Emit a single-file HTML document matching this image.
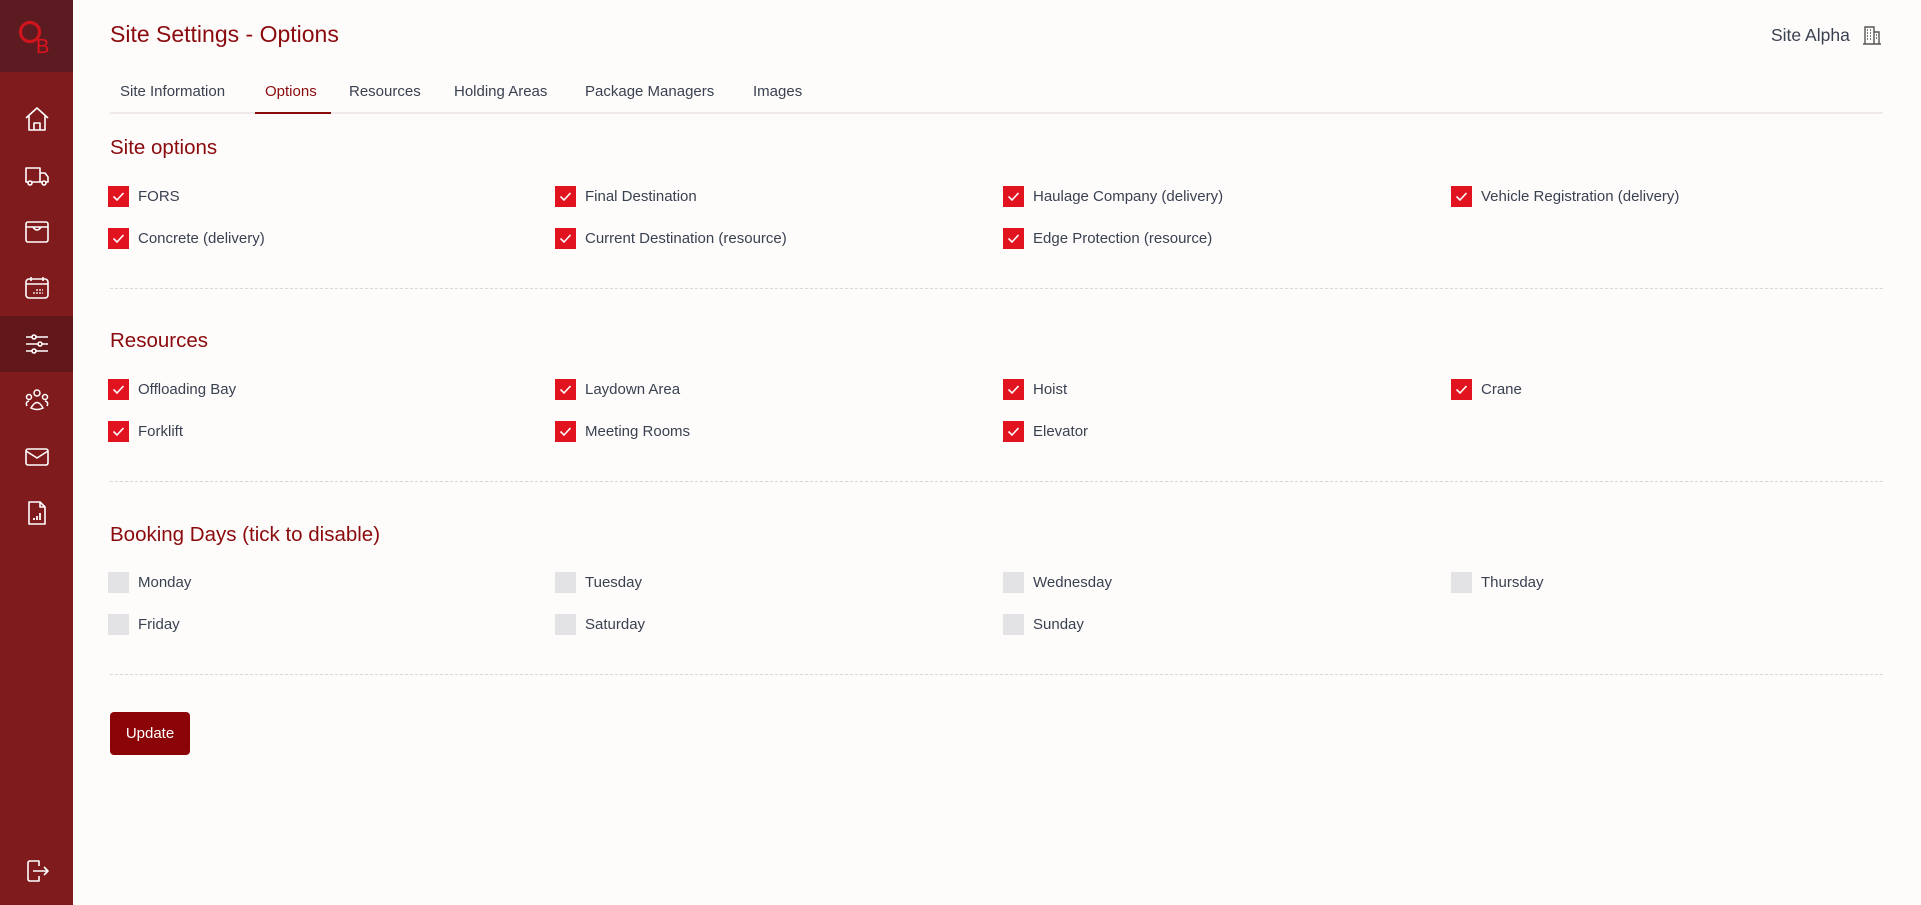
<!DOCTYPE html>
<html><head><meta charset="utf-8"><style>
*{margin:0;padding:0;box-sizing:border-box}
body{width:1921px;height:905px;background:#fdfcfb;font-family:"Liberation Sans",sans-serif;position:relative;overflow:hidden;color:#3a4150}
.sb{position:absolute;left:0;top:0;width:73px;height:905px;background:#7f1b1d}
.logo{position:absolute;left:0;top:0;width:73px;height:72px;background:#5c1b20}
.act{position:absolute;left:0;top:316px;width:73px;height:56px;background:#62171a}
.ic{position:absolute;left:24px;width:26px;height:26px}
.t{position:absolute;white-space:nowrap}
.h1{left:110px;top:21px;font-size:23px;color:#8b0a0d}
.tab{top:83px;font-size:15px;color:#3a4150}
.h2{left:110px;font-size:20.5px;color:#8b0a0d}
.cb{position:absolute;width:21px;height:21px;background:#e0131f}
.cb.off{background:#e3e3e6}
.cb svg{position:absolute;left:4px;top:5px}
.lb{position:absolute;font-size:15px;color:#3a4150;white-space:nowrap}
.dash{position:absolute;left:110px;width:1773px;border-top:1px dashed #d8d8d8}
</style></head><body>
<div class="sb"></div>
<div class="logo">
<svg width="73" height="72" viewBox="0 0 73 72"><circle cx="30" cy="32" r="9.5" fill="none" stroke="#d0141c" stroke-width="3.2"/><text x="36" y="53" font-family="Liberation Sans" font-size="20" fill="#e0131f">B</text></svg>
</div>
<div class="act"></div>
<svg class="ic" style="top:106px" viewBox="0 0 26 26" fill="none" stroke="#fff" stroke-width="1.6" stroke-linejoin="round"><path d="M2 12 L13 2 L24 12 M5 10 V24 H21 V10 M10 24 V17 H16 V24"/></svg>
<svg class="ic" style="top:163px" viewBox="0 0 26 26" fill="none" stroke="#fff" stroke-width="1.6" stroke-linejoin="round"><path d="M2 5 H16 V19 H2 Z M16 10 H21 L24 14 V19 H16"/><circle cx="6" cy="20" r="2" fill="#7f1b1d"/><circle cx="20" cy="20" r="2" fill="#7f1b1d"/></svg>
<svg class="ic" style="top:219px" viewBox="0 0 26 26" fill="none" stroke="#fff" stroke-width="1.6" stroke-linejoin="round"><rect x="2" y="3" width="22" height="20" rx="2"/><path d="M2 8 H24 M2 8 L9 8 Q13 14 17 8"/></svg>
<svg class="ic" style="top:275px" viewBox="0 0 26 26" fill="none" stroke="#fff" stroke-width="1.6"><rect x="2" y="4" width="22" height="19" rx="3"/><path d="M2 9 H24 M7 2 V6 M19 2 V6"/><path d="M9 18h2M12 18h2M15 18h2M12 15h2M15 15h2M18 15h1M18 18h1" stroke-width="1.3"/></svg>
<svg class="ic" style="top:331px" viewBox="0 0 26 26" fill="none" stroke="#fff" stroke-width="1.6"><path d="M2 6H24M2 13H24M2 20H24"/><circle cx="10" cy="6" r="2" fill="#62171a"/><circle cx="16" cy="13" r="2" fill="#62171a"/><circle cx="10" cy="20" r="2" fill="#62171a"/></svg>
<svg class="ic" style="top:387px" viewBox="0 0 26 26" fill="none" stroke="#fff" stroke-width="1.5"><circle cx="13" cy="6" r="3"/><circle cx="5" cy="10" r="2.5"/><circle cx="21" cy="10" r="2.5"/><path d="M7 21 Q13 10 19 21 Q13 24 7 21Z M3 19 Q1 15 5 14 M23 19 Q25 15 21 14"/></svg>
<svg class="ic" style="top:444px" viewBox="0 0 26 26" fill="none" stroke="#fff" stroke-width="1.6" stroke-linejoin="round"><rect x="2" y="5" width="22" height="16" rx="2"/><path d="M2 7 L13 14 L24 7"/></svg>
<svg class="ic" style="top:500px" viewBox="0 0 26 26" fill="none" stroke="#fff" stroke-width="1.6" stroke-linejoin="round"><path d="M5 2 H16 L21 7 V24 H5 Z M16 2 V7 H21"/><path d="M10 20V18M13 20V16M16 20V13" stroke-width="1.8"/></svg>
<svg class="ic" style="top:858px" viewBox="0 0 26 26" fill="none" stroke="#fff" stroke-width="1.6" stroke-linejoin="round"><path d="M15 8 V3 H6 Q4 3 4 5 V21 Q4 23 6 23 H15 V18 M9 13 H24 M20 9 L24 13 L20 17"/></svg>

<div class="t h1">Site Settings - Options</div>
<div class="t" style="left:1771px;top:25px;font-size:17.5px;color:#3a4150">Site Alpha</div>
<svg style="position:absolute;left:1862px;top:25px" width="20" height="20" viewBox="0 0 20 20" fill="none" stroke="#555" stroke-width="1.4"><path d="M1 19H19M3 19V2H12V19M12 7H17V19"/><path d="M5 5h1M8 5h1M5 8h1M8 8h1M5 11h1M8 11h1M5 14h1M8 14h1M14 10h1M14 13h1" stroke-width="1.5"/></svg>

<div style="position:absolute;left:110px;top:112px;width:1773px;height:2px;background:#efe9e9"></div>
<div style="position:absolute;left:255px;top:112px;width:76px;height:2px;background:#8b0a0d"></div>
<div class="t tab" style="left:120px">Site Information</div>
<div class="t tab" style="left:265px;color:#8b0a0d">Options</div>
<div class="t tab" style="left:349px">Resources</div>
<div class="t tab" style="left:454px">Holding Areas</div>
<div class="t tab" style="left:585px">Package Managers</div>
<div class="t tab" style="left:753px">Images</div>

<div class="t h2" style="top:136px">Site options</div>
<div class="dash" style="top:288px"></div>
<div class="t h2" style="top:329px">Resources</div>
<div class="dash" style="top:481px"></div>
<div class="t h2" style="top:523px">Booking Days (tick to disable)</div>
<div class="dash" style="top:674px"></div>

<div id="boxes"></div>
<div style="position:absolute;left:110px;top:712px;width:80px;height:43px;background:#8b0508;border-radius:4px;color:#fff;font-size:15px;text-align:center;line-height:43px">Update</div>

<script>
var cols=[108,555,1003,1451];
var rows=[
[186,["FORS","Final Destination","Haulage Company (delivery)","Vehicle Registration (delivery)"],1],
[228,["Concrete (delivery)","Current Destination (resource)","Edge Protection (resource)"],1],
[379,["Offloading Bay","Laydown Area","Hoist","Crane"],1],
[421,["Forklift","Meeting Rooms","Elevator"],1],
[572,["Monday","Tuesday","Wednesday","Thursday"],0],
[614,["Friday","Saturday","Sunday"],0]];
var h="";
rows.forEach(function(r){r[1].forEach(function(l,i){
h+='<div class="cb'+(r[2]?'':' off')+'" style="left:'+cols[i]+'px;top:'+r[0]+'px">'+(r[2]?'<svg width="13" height="11" viewBox="0 0 13 11"><path d="M1.5 5.5 L5 9 L11.5 2" fill="none" stroke="#fff" stroke-width="1.6"/></svg>':'')+'</div>';
h+='<div class="lb" style="left:'+(cols[i]+30)+'px;top:'+(r[0]+2)+'px">'+l+'</div>';});});
document.getElementById("boxes").innerHTML=h;
</script>
</body></html>
